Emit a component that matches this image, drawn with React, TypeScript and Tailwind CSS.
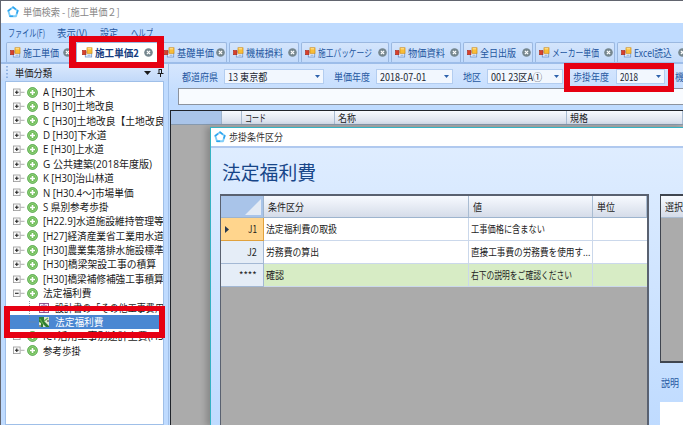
import { useLayoutEffect, useRef } from 'react';
import clsx from 'clsx';

interface LabelProps {
  text: string;
  w: number;
  className?: string;
}

// Condenses a line of text so that it takes exactly `w` pixels
function Label({ text, w, className }: LabelProps) {
  const ref = useRef<HTMLSpanElement>(null);

  useLayoutEffect(() => {
    const el = ref.current;
    if (el) el.style.transform = `scaleX(${w / el.offsetWidth})`;
  }, [w, text]);

  return (
    <span className={clsx('flex shrink-0 items-center leading-none', className)} style={{ width: w }}>
      <span ref={ref} className="inline-block origin-left whitespace-pre">
        {text}
      </span>
    </span>
  );
}

const tabs = [
  { text: '施工単価', w: 36, box: 'w-[68px]' },
  { text: '施工単価2', w: 44, box: 'w-[82px]', active: true },
  { text: '基礎単価', w: 37, box: 'w-[67px]' },
  { text: '機械損料', w: 37, box: 'w-[70px]' },
  { text: '施工パッケージ', w: 54, box: 'w-[88px]' },
  { text: '物価資料', w: 37, box: 'w-[70px]' },
  { text: '全日出版', w: 36, box: 'w-[70px]' },
  { text: 'メーカー単価', w: 47, box: 'w-[80px]' },
  { text: 'Excel読込', w: 38, box: 'w-[72px]' },
];

const tree = [
  { text: 'A [H30]土木', w: 52 },
  { text: 'B [H30]土地改良', w: 71 },
  { text: 'C [H30]土地改良【土地改良', w: 121 },
  { text: 'D [H30]下水道', w: 63 },
  { text: 'E [H30]上水道', w: 61 },
  { text: 'G 公共建築(2018年度版)', w: 109 },
  { text: 'K [H30]治山林道', w: 71 },
  { text: 'N [H30.4～]市場単価', w: 91 },
  { text: 'S 県別参考歩掛', w: 66 },
  { text: '[H22.9]水道施設維持管理等', w: 121 },
  { text: '[H27]経済産業省工業用水道', w: 121 },
  { text: '[H30]農業集落排水施設標準', w: 121 },
  { text: '[H30]橋梁架設工事の積算', w: 113 },
  { text: '[H30]橋梁補修補強工事積算', w: 121 },
  { text: '法定福利費', w: 49, kind: 'open' },
  { text: '設計書の「その他工事費用', w: 109, kind: 'book' },
  { text: '法定福利費', w: 49, kind: 'selected' },
  { text: 'ICT活用工事別途計上費(H3', w: 121 },
  { text: '参考歩掛', w: 38 },
];

const rows = [
  { no: 'J1', noW: 9, name: '法定福利費の取扱', nameW: 71, value: '工事価格に含まない', valueW: 74 },
  { no: 'J2', noW: 10, name: '労務費の算出', nameW: 53, value: '直接工事費の労務費を使用す...', valueW: 119 },
  { no: '****', noW: 18, name: '確認', nameW: 18, value: '右下の説明をご確認ください', valueW: 101 },
];

function Logo() {
  return (
    <svg width="12" height="12" viewBox="0 0 12 12" className="shrink-0">
      <path d="M6 1.2 10.7 4.8 9 10.2H3L1.3 4.8Z" fill="#fff" stroke="#7fcdf8" strokeWidth="1.9" strokeLinejoin="round" />
      <path d="M1.3 4.8 3.6 3M3 10.2H5.5M10.7 4.8 10 7M6 1.2 8.3 3" stroke="#2ba3ee" strokeWidth="1.5" strokeLinecap="round" fill="none" />
    </svg>
  );
}

function TabIcon() {
  return (
    <svg width="11" height="11" viewBox="0 0 11 11" className="shrink-0">
      <rect x="3.3" y="5" width="6.4" height="5" fill="#e8effa" stroke="#6d94cc" strokeWidth=".8" />
      <rect x="5" y=".8" width="5" height="5.5" fill="#f9bd38" stroke="#d08d17" strokeWidth=".7" />
      <path d="M5.6 1.8h3.6" stroke="#ffe9a0" strokeWidth="1" />
      <rect x=".5" y="3.5" width="3.4" height="4.2" fill="#d9402b" stroke="#a92a1c" strokeWidth=".6" />
      <path d="M5.5 8.2h3" stroke="#8aa9d9" strokeWidth="1" />
    </svg>
  );
}

function CloseIcon() {
  return (
    <svg width="9" height="9" viewBox="0 0 9 9" className="shrink-0">
      <circle cx="4.5" cy="4.5" r="4.3" fill="#76878f" />
      <path d="m2.9 2.9 3.2 3.2m0-3.2L2.9 6.1" stroke="#fff" strokeWidth="1.3" />
    </svg>
  );
}

function Expander({ open }: { open?: boolean }) {
  return (
    <svg width="12" height="9" viewBox="0 0 12 9" className="shrink-0">
      <rect x=".5" y="1" width="6.6" height="6.6" fill="#fafafa" stroke="#969696" strokeWidth=".8" />
      <path d={open ? 'M2 4.3h3.6' : 'M2 4.3h3.6M3.8 2.5v3.6'} stroke="#222" strokeWidth="1.1" />
      <path d="M7.5 4.3h4" stroke="#999" strokeWidth=".8" />
    </svg>
  );
}

function PlusIcon() {
  return (
    <svg width="11" height="11" viewBox="0 0 11 11" className="shrink-0">
      <circle cx="5.5" cy="5.5" r="4.9" fill="#6cbb55" stroke="#3f9a35" strokeWidth=".8" />
      <circle cx="5.5" cy="5.5" r="4" fill="none" stroke="#a5dc92" strokeWidth=".7" />
      <path d="M5.5 3v5M3 5.5h5" stroke="#fff" strokeWidth="1.6" />
    </svg>
  );
}

function TreeRow({ text, w, kind }: { text: string; w: number; kind?: string }) {
  if (kind === 'book' || kind === 'selected') {
    const selected = kind === 'selected';
    return (
      <div className={clsx('flex h-[14.39px] shrink-0 items-center', selected ? 'ml-[4px] bg-[#4a87d2] pl-[18px] text-white' : 'pl-[22px]')}>
        <svg width="10" height="14" viewBox="0 0 10 14" className="shrink-0">
          <path d={selected ? 'M1.5 0v7H9' : 'M1.5 0v14M1.5 7H9'} stroke="#7b8794" strokeWidth=".8" strokeDasharray="1 1" fill="none" />
        </svg>
        <svg width="12" height="12" viewBox="0 0 12 12" className="mr-[5px] shrink-0">
          {selected ? (
            <>
              <rect x="1" y="1" width="10" height="10" fill="#dfe9cf" />
              <path d="M1 1h5v4l5 5v1H8L5 8v3H3V7L1 6Z" fill="#2f7d32" />
              <path d="m6 5 4-3M2 3l3 5" stroke="#63ad4d" strokeWidth="1.4" />
              <path d="M1 10h2M9 5h2" stroke="#333" />
            </>
          ) : (
            <>
              <rect x="1.5" y="1.5" width="9" height="9" fill="#f6eaf6" stroke="#915b92" />
              <path d="M6 1v10M3 4h2M7 4h2M3 7h2M7 7h2" stroke="#7a4b8e" />
            </>
          )}
        </svg>
        <Label text={text} w={w} />
      </div>
    );
  }
  return (
    <div className="flex h-[14.39px] shrink-0 items-center pl-[7px]">
      <Expander open={kind === 'open'} />
      <span className="w-[2px] shrink-0" />
      <PlusIcon />
      <span className="w-[5px] shrink-0" />
      <Label text={text} w={w} />
    </div>
  );
}

function Combo({ text, w, className }: LabelProps) {
  return (
    <div className={clsx('flex h-[15px] shrink-0 items-center justify-between border border-[#b3cdf0] bg-[#f2f7fe] pr-[3px] pl-[3px] text-[#1c2733]', className)}>
      <Label text={text} w={w} />
      <svg width="5" height="3" viewBox="0 0 5 3">
        <path d="M0 0h5L2.5 3Z" fill="#2d62ac" />
      </svg>
    </div>
  );
}

function Toolbar() {
  return (
    <div className="flex h-[25px] shrink-0 items-center pl-[13px] text-[10px] text-[#2457a0]">
      <Label text="都道府県" w={36} className="mr-[6px]" />
      <Combo text="13 東京都" w={39} className="mr-[10px] w-[100px]" />
      <Label text="単価年度" w={36} className="mr-[6px]" />
      <Combo text="2018-07-01" w={46} className="mr-[10px] w-[77px]" />
      <Label text="地区" w={18} className="mr-[6px]" />
      <Combo text="001 23区A①" w={51} className="mr-[10px] w-[76px]" />
      <Label text="歩掛年度" w={36} className="mr-[7px]" />
      <Combo text="2018" w={18} className="mr-[10px] w-[49px]" />
      <Label text="機" w={9} />
    </div>
  );
}

const headCell = 'flex shrink-0 items-center border-r border-[#a9bcd2] bg-gradient-to-b from-[#f7faff] to-[#d5dce9]';

function ConditionTable() {
  return (
    <div className="w-[429px] shrink-0 border-t-2 border-r-2 border-l border-[#596170] bg-[#ababab] text-[10px] text-[#1d1d1d]">
      <div className="flex h-[22px] border-b border-[#9db4ce]">
        <div className="flex w-[43px] shrink-0 items-end justify-end border-r border-[#9db4ce] bg-[#a9c4e9] pr-[2px] pb-[2px]">
          <svg width="16" height="16" viewBox="0 0 16 16">
            <path d="M16 0v16H0Z" fill="#e4ebf5" />
          </svg>
        </div>
        <div className={clsx(headCell, 'w-[205px] pl-[4px]')}><Label text="条件区分" w={36} /></div>
        <div className={clsx(headCell, 'w-[124px] pl-[4px]')}><Label text="値" w={9} /></div>
        <div className={clsx(headCell, 'grow pl-[4px]')}><Label text="単位" w={18} /></div>
      </div>
      {rows.map((row, i) => (
        <div key={row.no} className={clsx('flex h-[23px]', i === 2 ? 'bg-[#d7ecc5]' : 'bg-white')}>
          <div
            className={clsx(
              'flex w-[43px] shrink-0 items-center border-r border-b pr-[6px]',
              i === 0 ? 'border-[#e0a13d] bg-[#ffd58d]' : 'border-[#a3b8d4] bg-[#e5edf7]',
            )}
          >
            {i === 0 && (
              <svg width="4" height="7" viewBox="0 0 4 7" className="ml-[4px]">
                <path d="M0 0 4 3.5 0 7Z" fill="#28394f" />
              </svg>
            )}
            <Label text={row.no} w={row.noW} className="ml-auto" />
          </div>
          <div className="flex w-[205px] shrink-0 items-center border-r border-b border-[#cbd8eb] pl-[2px]"><Label text={row.name} w={row.nameW} /></div>
          <div className="flex w-[124px] shrink-0 items-center border-r border-b border-[#cbd8eb] pl-[2px]"><Label text={row.value} w={row.valueW} /></div>
          <div className="grow border-b border-[#cbd8eb]" />
        </div>
      ))}
    </div>
  );
}

function ConditionDialog() {
  return (
    <div className="absolute top-[126px] left-[209px] flex h-[299px] w-[474px] flex-col overflow-hidden border-t border-l border-[#35b3c4] bg-gradient-to-b from-[#e1eeff] to-[#bfdbff] shadow-[-4px_0_6px_rgba(0,0,0,0.2)]">
      <div className="flex h-[20px] shrink-0 items-center border-b-2 border-[#b0c9ef] bg-white pl-[3px] text-[10px] text-[#333]">
        <Logo />
        <Label text="歩掛条件区分" w={54} className="ml-[3px]" />
      </div>
      <div className="flex h-[46px] shrink-0 items-center pl-[11px] text-[19px] text-[#174588]">
        <Label text="法定福利費" w={94} />
      </div>
      <div className="flex min-h-0 grow pl-[9px]">
        <ConditionTable />
        <div className="ml-[11px] flex grow flex-col">
          <div className="h-[169px] shrink-0 overflow-hidden border-t-2 border-b-2 border-l border-[#3f454f] bg-[#ababab] text-[10px] text-[#1d1d1d]">
            <div className={clsx(headCell, 'h-[22px] border-b pl-[4px]')}><Label text="選択" w={18} /></div>
          </div>
          <div className="flex h-[39px] shrink-0 items-center pl-px text-[10px] text-[#2457a0]">
            <Label text="説明" w={18} />
          </div>
          <div className="grow bg-white" />
        </div>
      </div>
    </div>
  );
}

export default function App() {
  return (
    <div className="relative flex h-[425px] w-[683px] flex-col overflow-hidden border-t border-l border-[#62656f] bg-[#bfdbff] font-['Noto_Sans_CJK_JP',sans-serif]">
      <div className="flex h-[22px] shrink-0 items-center bg-white pl-[6px] text-[10px] text-[#888]">
        <Logo />
        <Label text="単価検索 - [施工単価２]" w={97} className="ml-[4px]" />
      </div>
      <div className="flex h-[19px] shrink-0 items-center gap-[12px] pl-[7px] text-[10px] text-[#2457a0]">
        <Label text="ファイル(F)" w={37} />
        <Label text="表示(V)" w={31} />
        <Label text="設定" w={18} />
        <Label text="ヘルプ" w={22} className="ml-px" />
      </div>
      <div className="flex h-[22px] shrink-0 gap-[2px] overflow-hidden border-b-2 border-[#9dbde9] pl-[5px] text-[10px] text-[#2457a0]">
        {tabs.map((tab) => (
          <div
            key={tab.text}
            className={clsx(
              'flex h-[20px] shrink-0 items-center rounded-t-[2px] border border-b-0 border-[#9bb8e0]',
              tab.box,
              tab.active ? 'bg-white pr-[4px] pl-[5px] font-bold text-[#153c80]' : 'bg-gradient-to-b from-[#d4e5fc] to-[#c3dafa] pr-px pl-[3px]',
            )}
          >
            <TabIcon />
            <Label text={tab.text} w={tab.w} className="mr-auto ml-[2px]" />
            <CloseIcon />
          </div>
        ))}
      </div>
      <div className="flex min-h-0 grow">
        <div className="flex w-[168px] shrink-0 flex-col border-r border-[#a1c0e9]">
          <div className="flex h-[17px] shrink-0 items-center bg-gradient-to-b from-[#dbe9fd] to-[#c2d9f9] pl-[5px] text-[10px] text-[#202020]">
            <svg width="2" height="13" viewBox="0 0 2 13">
              <path d="M1 0v13" stroke="#6e98d3" strokeWidth="1.3" strokeDasharray="1.5 2" />
            </svg>
            <Label text="単価分類" w={37} className="ml-[7px]" />
            <svg width="7" height="4" viewBox="0 0 7 4" className="ml-[92px]">
              <path d="M0 0h7L3.5 4Z" fill="#1b1b1b" />
            </svg>
            <svg width="7" height="8" viewBox="0 0 7 8" className="ml-[6px]">
              <path d="M2 0v4M4.5 0v4M2 .5h3M.5 4.5h6M3.5 4.5V8" stroke="#1b1b1b" strokeWidth="1" />
            </svg>
          </div>
          <div className="mr-[4px] ml-[4px] flex min-h-0 grow flex-col overflow-hidden border border-[#9fbfe8] bg-white pt-[3px] font-['Open_Sans','Noto_Sans_CJK_JP',sans-serif] text-[10.5px] text-[#1a1a1a]">
            {tree.map((node, i) => (
              <TreeRow key={i} {...node} />
            ))}
          </div>
        </div>
        <div className="flex min-w-0 grow flex-col overflow-hidden bg-gradient-to-b from-[#d6e6fd] to-[#bfdbff] to-10%">
          <Toolbar />
          <div className="mt-[-1px] ml-[9px] h-[17px] shrink-0 border border-r-0 border-[#8c939e] bg-[#f8fbff]" />
          <div className="mt-[5px] ml-px min-h-0 grow border-t border-l border-[#20242b] bg-[#ababab] text-[10px] text-[#1d1d1d]">
            <div className="flex h-[14px] border-b border-[#8699ae]">
              <div className="w-[51px] shrink-0 border-r border-[#9db4ce] bg-[#a9c4e9]" />
              <div className={clsx(headCell, 'w-[20px]')} />
              <div className={clsx(headCell, 'w-[93px] pl-[3px]')}><Label text="コード" w={21} /></div>
              <div className={clsx(headCell, 'w-[232px] pl-[3px]')}><Label text="名称" w={18} /></div>
              <div className={clsx(headCell, 'grow pl-[3px]')}><Label text="規格" w={18} /></div>
            </div>
          </div>
        </div>
      </div>

      <ConditionDialog />

      {/* Highlight frames */}
      <div className="absolute top-[35px] left-[68px] h-[32px] w-[95px] border-x-7 border-y-6 border-[#e60012]" />
      <div className="absolute top-[62px] left-[563px] h-[29px] w-[110px] border-6 border-[#e60012]" />
      <div className="absolute top-[305px] left-[3px] h-[32px] w-[161px] border-x-6 border-t-5 border-b-6 border-[#e60012]" />
    </div>
  );
}
